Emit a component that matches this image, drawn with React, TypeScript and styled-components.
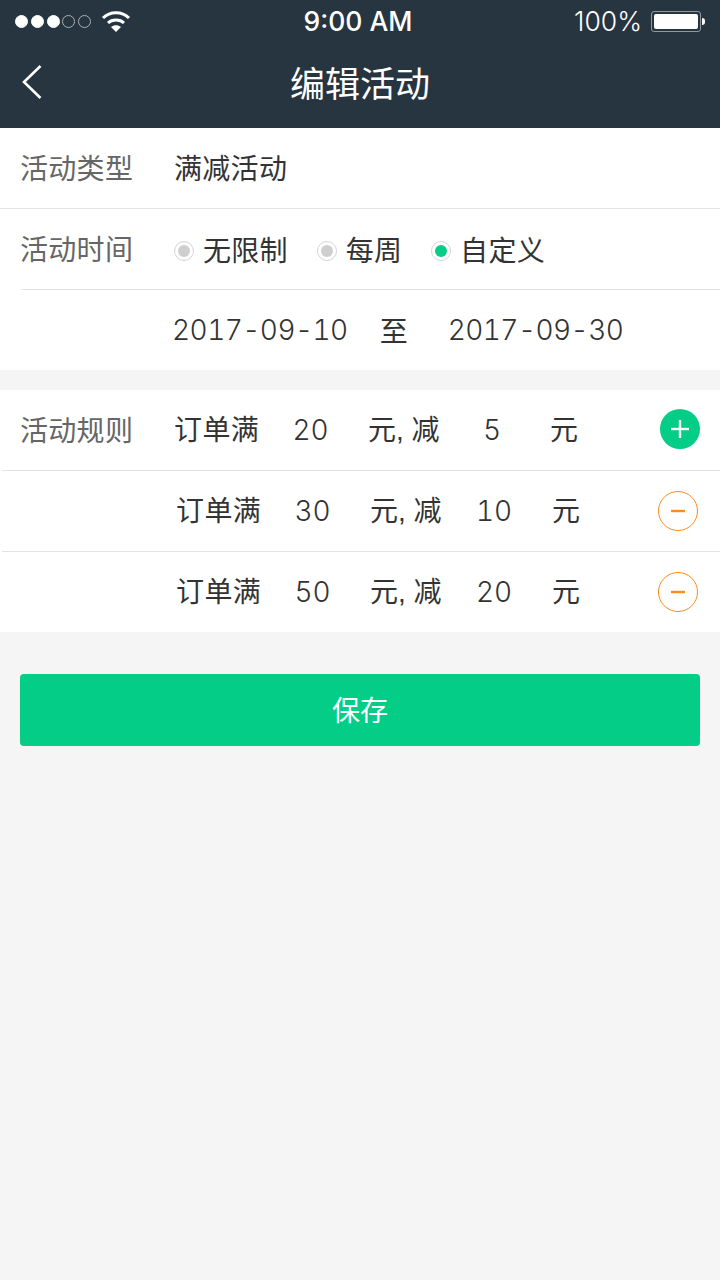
import React from "react";
import styled, {createGlobalStyle} from "styled-components";

const GlobalStyle = createGlobalStyle`
  html, body {
    margin: 0;
    padding: 0;
    background-color: #f5f5f5;
  }
  body {
    font-family: "Liberation Sans", "Noto Sans CJK SC", sans-serif;
  }
`;

const Page = styled.div`
  width: 720px;
  height: 1280px;
  display: flex;
  flex-direction: column;
  background-color: #f5f5f5;
  overflow: hidden;
`;

const Header = styled.header`
  height: 128px;
  background-color: #263540;
  color: #fff;
  display: flex;
  flex-direction: column;
`;

const StatusBar = styled.div`
  height: 42px;
  padding: 0 19px 0 15px;
  display: grid;
  grid-template-columns: 1fr auto 1fr;
  align-items: center;
`;

const StatusLeft = styled.div`
  display: flex;
  align-items: center;
`;

const Dot = styled.span<{$filled?: boolean}>`
  width: 13px;
  height: 13px;
  margin-right: 2.75px;
  box-sizing: border-box;
  border-radius: 50%;
  background-color: ${props => props.$filled ? "#fff" : "transparent"};
  border: 1px solid ${props => props.$filled ? "#fff" : "#aab0b5"};
`;

const WifiIcon = styled.svg`
  margin-left: 7px;
`;

const Clock = styled.span`
  font-family: Inter, "Liberation Sans", sans-serif;
  font-size: 26.5px;
  font-weight: 500;
`;

const StatusRight = styled.div`
  display: flex;
  align-items: center;
  justify-content: flex-end;
  font-family: Inter, "Liberation Sans", sans-serif;
  font-size: 26.5px;
  font-weight: 300;
`;

const Battery = styled.span`
  width: 50px;
  height: 21px;
  margin-left: 9px;
  padding: 2px;
  box-sizing: border-box;
  border: 1px solid #8f989e;
  border-radius: 3px;
  position: relative;
  &::before {
    content: "";
    display: block;
    height: 100%;
    background-color: #fff;
    border-radius: 2px;
  }
  &::after {
    content: "";
    position: absolute;
    right: -5px;
    top: 6px;
    width: 3px;
    height: 7px;
    background-color: #fff;
    border-radius: 0 3px 3px 0;
  }
`;

const NavBar = styled.div`
  flex: 1;
  display: flex;
  align-items: center;
  justify-content: center;
  position: relative;
  padding-bottom: 8px;
`;

const BackIcon = styled.svg`
  position: absolute;
  left: 20px;
  top: 22px;
`;

const Title = styled.h1`
  margin: 0;
  font-size: 35px;
  font-weight: 400;
`;

const Section = styled.section<{$gap?: number}>`
  background-color: #fff;
  margin-top: ${props => props.$gap ?? 0}px;
`;

const Row = styled.div<{$divider?: number}>`
  height: 80px;
  display: flex;
  align-items: center;
  position: relative;
  padding-left: 20px;
  &:not(:first-child) {
    margin-top: 1px;
  }
  &:not(:first-child)::before {
    content: "";
    position: absolute;
    left: ${props => props.$divider ?? 0}px;
    right: 0;
    top: -1px;
    height: 1px;
    background-color: #e3e3e3;
  }
`;

const Label = styled.span`
  width: 154px;
  padding-bottom: 3px;
  flex: none;
  font-size: 28px;
  letter-spacing: 0.3px;
  color: #666;
`;

const Value = styled.span`
  padding-bottom: 3px;
  font-size: 28px;
  letter-spacing: 0.3px;
  color: #333;
`;

const Radio = styled.label`
  display: flex;
  align-items: center;
  font-size: 28px;
  letter-spacing: 0.3px;
  color: #333;
  margin-right: 28.8px;
`;

const RadioMark = styled.span<{$checked?: boolean}>`
  width: 20px;
  height: 20px;
  margin: 4px 9px 0 0;
  box-sizing: border-box;
  border: 1px solid #d4d4d4;
  border-radius: 50%;
  display: flex;
  align-items: center;
  justify-content: center;
  &::after {
    content: "";
    width: 12px;
    height: 12px;
    border-radius: 50%;
    background-color: ${props => props.$checked ? "#03cd86" : "#cecece"};
  }
`;

const DateRow = styled.div`
  margin-left: 152px;
  display: flex;
  align-items: center;
  font-family: Inter, "Liberation Sans", "Noto Sans CJK SC", sans-serif;
  font-size: 28px;
  font-weight: 300;
  font-variant-numeric: tabular-nums;
  letter-spacing: -0.55px;
  color: #333;
`;

const DateTo = styled.span`
  width: 100px;
  padding-right: 8px;
  box-sizing: border-box;
  text-align: center;
  font-family: "Liberation Sans", "Noto Sans CJK SC", sans-serif;
  font-size: 28px;
  font-weight: 400;
  letter-spacing: 0;
`;

const RuleRow = styled.div<{$left: number}>`
  display: flex;
  align-items: center;
  flex: 1;
  padding-left: ${props => props.$left}px;
  padding-right: ${props => props.$left ? 22 : 20}px;
`;

const RuleText = styled.span`
  width: 85px;
  flex: none;
  padding-bottom: 4px;
  font-size: 28px;
  letter-spacing: 0.4px;
  color: #333;
  white-space: nowrap;
`;

const RuleAmount = styled.span<{$width: number}>`
  width: ${props => props.$width}px;
  flex: none;
  text-align: center;
  font-family: Inter, "Liberation Sans", sans-serif;
  font-size: 28px;
  font-weight: 300;
  font-variant-numeric: tabular-nums;
  color: #333;
`;

const RuleUnit = styled.span`
  width: 72px;
  margin-left: 6px;
  flex: none;
  padding-bottom: 4px;
  font-size: 28px;
  color: #333;
  white-space: nowrap;
`;

const RuleEnd = styled.span`
  margin-left: 6px;
  padding-bottom: 4px;
  font-size: 28px;
  color: #333;
`;

const RoundButton = styled.button<{$add?: boolean}>`
  width: 40px;
  height: 40px;
  margin-left: auto;
  margin-top: ${props => props.$add ? -2 : 0}px;
  padding: 0;
  box-sizing: border-box;
  border-radius: 50%;
  display: flex;
  align-items: center;
  justify-content: center;
  background-color: ${props => props.$add ? "#03cd86" : "#fff"};
  border: ${props => props.$add ? "none" : "1px solid #ff8c14"};
`;

const SaveButton = styled.button`
  margin: 42px 20px 0;
  height: 72px;
  padding: 0 0 3px;
  border: none;
  border-radius: 4px;
  background-color: #03cd86;
  color: #fff;
  font-family: inherit;
  font-size: 28px;
`;

const rules = [
    {full: "20", cut: "5", add: true},
    {full: "30", cut: "10", add: false},
    {full: "50", cut: "20", add: false},
];

export default function App() {
    return (
        <Page>
            <GlobalStyle/>
            <Header>
                <StatusBar>
                    <StatusLeft>
                        <Dot $filled/><Dot $filled/><Dot $filled/><Dot/><Dot/>
                        <WifiIcon width="30" height="24" viewBox="0 0 30 24" fill="none" stroke="#fff" strokeWidth="3">
                            <path d="M2 9 C9 2 21 2 28 9"/>
                            <path d="M7 14 C11 10 19 10 23 14"/>
                            <path d="M10 18 L15 23 L20 18 C17 15.5 13 15.5 10 18Z" fill="#fff" stroke="none"/>
                        </WifiIcon>
                    </StatusLeft>
                    <Clock>9:00 AM</Clock>
                    <StatusRight>
                        100%
                        <Battery/>
                    </StatusRight>
                </StatusBar>
                <NavBar>
                    <BackIcon width="24" height="36" viewBox="0 0 24 36" fill="none" stroke="#fff" strokeWidth="2.6">
                        <path d="M20.5 2 L4 18 L20.5 34"/>
                    </BackIcon>
                    <Title>编辑活动</Title>
                </NavBar>
            </Header>

            <Section>
                <Row>
                    <Label>活动类型</Label>
                    <Value>满减活动</Value>
                </Row>
                <Row>
                    <Label>活动时间</Label>
                    <Radio><RadioMark/>无限制</Radio>
                    <Radio><RadioMark/>每周</Radio>
                    <Radio><RadioMark $checked/>自定义</Radio>
                </Row>
                <Row $divider={21}>
                    <DateRow>
                        2017-09-10
                        <DateTo>至</DateTo>
                        2017-09-30
                    </DateRow>
                </Row>
            </Section>

            <Section $gap={20}>
                {rules.map((rule, index) => (
                    <Row key={rule.full} $divider={2}>
                        {index === 0 ? <Label>活动规则</Label> : <Label/>}
                        <RuleRow $left={index === 0 ? 0 : 2}>
                            <RuleText>订单满</RuleText>
                            <RuleAmount $width={103}>{rule.full}</RuleAmount>
                            <RuleUnit>元, 减</RuleUnit>
                            <RuleAmount $width={104}>{rule.cut}</RuleAmount>
                            <RuleEnd>元</RuleEnd>
                            <RoundButton $add={rule.add} aria-label={rule.add ? "add" : "remove"}>
                                <svg width="24" height="24" viewBox="0 0 24 24" stroke={rule.add ? "#fff" : "#ff8c14"} strokeWidth="2.4">
                                    {rule.add && <path d="M12 3 V21"/>}
                                    <path d={rule.add ? "M3 12 H21" : "M5 12 H19"}/>
                                </svg>
                            </RoundButton>
                        </RuleRow>
                    </Row>
                ))}
            </Section>

            <SaveButton>保存</SaveButton>
        </Page>
    );
}
